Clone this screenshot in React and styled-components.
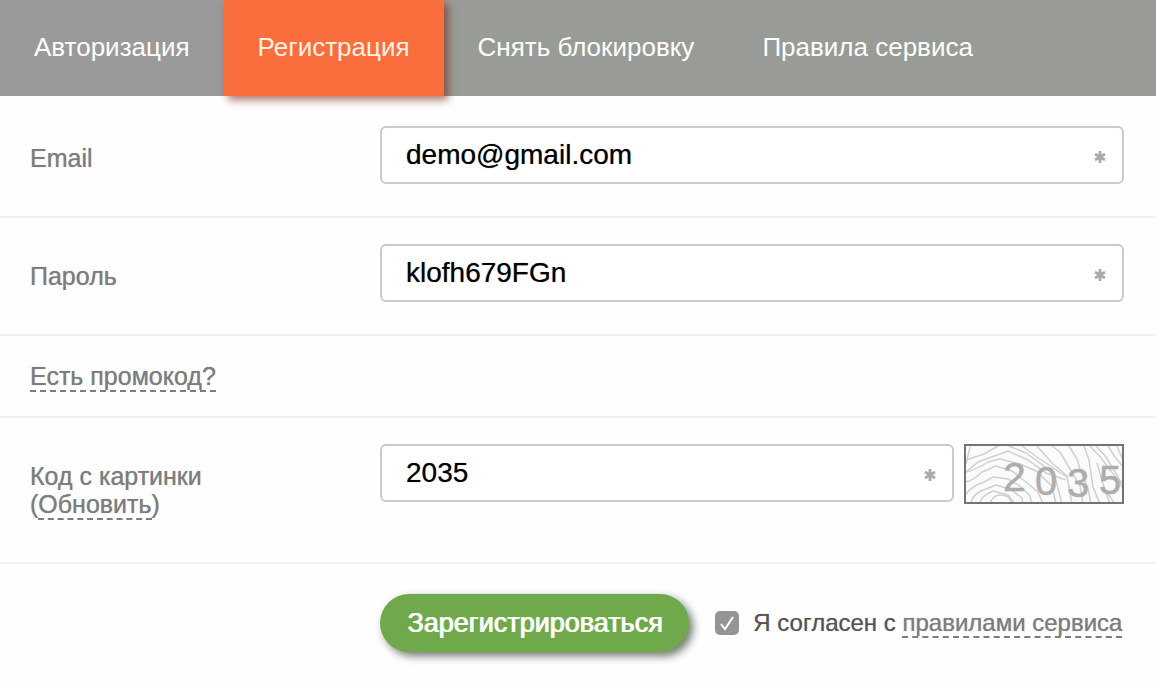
import React from "react";
import styled, { createGlobalStyle } from "styled-components";

const GlobalStyle = createGlobalStyle`
  * {
    box-sizing: border-box;
  }
  body {
    margin: 0;
    background: #fefefe;
    font-family: "Liberation Sans", Arial, sans-serif;
    font-size: 25px;
    line-height: 28px;
    color: #7d7d7d;
  }
`;

const Nav = styled.nav`
  display: flex;
  background: linear-gradient(90deg, #9a9a9a 0, #9a9a9a 222px, #999b97 442px);
`;

const Tab = styled.a`
  height: 96px;
  padding: 0 34px;
  font-size: 26px;
  line-height: 94px;
  white-space: nowrap;
  text-decoration: none;
  color: ${(props) => (props.$active ? "#fff3e2" : "#fff")};
  background: ${(props) => (props.$active ? "#fa6d3c" : "transparent")};
  box-shadow: ${(props) =>
    props.$active ? "4px 4px 8px rgba(120, 30, 10, 0.6)" : "none"};
`;

const Form = styled.form`
  padding-top: 4px;
`;

const Row = styled.div`
  display: grid;
  grid-template-columns: 350px 1fr;
  align-items: start;
  padding: 26px 32px 32px 30px;
  border-bottom: 2px solid #f1f1f1;
`;

const PromoRow = styled.div`
  padding: 26px 30px;
  border-bottom: 2px solid #f1f1f1;
`;

const LabelBox = styled.div`
  padding: 18px 0 12px;
  text-shadow: 0 0 1px #9a9a9a;
`;

const Label = styled.label`
  display: block;
`;

const DashedLink = styled.a`
  color: #7d7d7d;
  text-decoration: none;
  text-shadow: 0 0 1px #9a9a9a;
  border-bottom: 2px dashed #7d7d7d;
`;

const Fields = styled.div`
  display: flex;
  gap: 10px;
`;

const InputWrap = styled.div`
  position: relative;
  flex: 1;
  height: 58px;
`;

const Input = styled.input`
  display: block;
  width: 100%;
  height: 58px;
  padding: 0 60px 0 24px;
  border: 2px solid #cbcbcb;
  border-radius: 6px;
  background: #fff;
  font-family: inherit;
  font-size: 28px;
  color: #000;
  text-shadow: 0 0 1px #777;
  outline: none;
`;

const Star = styled.svg`
  position: absolute;
  top: 25px;
  right: 18px;
  width: 12px;
  height: 12px;
`;

const Captcha = styled.svg`
  display: block;
  width: 160px;
  height: 60px;
  font-family: "Liberation Sans", Arial, sans-serif;
`;

const Footer = styled.div`
  display: flex;
  align-items: center;
  padding: 30px 28px 32px 380px;
`;

const Submit = styled.button`
  height: 58px;
  padding: 0 27px;
  border: 0;
  border-radius: 29px;
  background: #70a94b;
  box-shadow: 4px 4px 8px rgba(40, 50, 30, 0.65);
  font-family: inherit;
  font-size: 27px;
  color: #fff;
  text-shadow: 1px 0 0 #fff;
  white-space: nowrap;
`;

const Agree = styled.div`
  display: flex;
  align-items: center;
  gap: 14px;
  margin-left: 26px;
  font-size: 24px;
  color: #545454;
  white-space: nowrap;
`;

const Check = styled.input`
  appearance: none;
  flex: none;
  width: 24px;
  height: 24px;
  margin: 0;
  border-radius: 5px;
  background: #959595;

  &:checked {
    background: #959595
      url("data:image/svg+xml,%3Csvg xmlns='http://www.w3.org/2000/svg' viewBox='0 0 24 24'%3E%3Cpath d='M6 13l4 5L18 6' fill='none' stroke='white' stroke-width='2'/%3E%3C/svg%3E");
  }
`;

const AgreeText = styled.span`
  text-shadow: 0 0 1px #999;
`;

const tabs = [
  "Авторизация",
  "Регистрация",
  "Снять блокировку",
  "Правила сервиса",
];

const Required = () => (
  <Star viewBox="0 0 12 12" aria-hidden="true">
    <path
      d="M6 0v12M1 3l10 6M1 9l10-6"
      stroke="#aaa"
      strokeWidth="2.8"
      fill="none"
    />
  </Star>
);

const CaptchaImage = () => (
  <Captcha viewBox="0 0 160 60" role="img" aria-label="2035">
    <rect width="160" height="60" fill="#fbfbfb" />
    <g fill="none" stroke="#d0d0d0" strokeWidth="1.5">
      <path d="M2 16L20 10L34 2" />
      <path d="M2 28L14 18L44 7L64 16L82 29L102 36" />
      <path d="M2 28Q14 25 24 18L36 15L56 20L72 27L88 42L92 60" />
      <path d="M2 38Q10 36 18 28L32 22L48 27L62 38L74 48L79 60" />
      <path d="M2 50Q8 42 20 38L29 33L44 35L56 42L66 52L68 60" />
      <path d="M7 59Q9 49 22 45L32 41L46 45L58 54L59 60" />
      <path d="M16 59Q17 52 29 47L44 51L51 60" />
      <path d="M26 60Q28 51 37 51T48 60" />
      <path d="M2 20L6 3" />
      <path d="M45 2L62 9L80 22L91 33L98 60" />
      <path d="M58 2L73 13L88 23L104 34" />
      <path d="M73 2L88 19L103 32L108 60" />
      <path d="M88 2L96 8L106 25L116 42L119 60" />
      <path d="M105 2L113 15L117 28L124 44L127 60" />
      <path d="M120 2L125 16L129 43L136 60" />
      <path d="M126 2L137 14L150 31L160 40" />
      <path d="M132 2L142 13L153 31L160 48" />
      <path d="M144 2L151 13L160 24" />
      <path d="M153 2L158 14" />
      <path d="M133 19L139 40L146 60M140 44L151 60" />
    </g>
    <g fill="#adadad" stroke="#adadad" strokeWidth="0.5">
      <text x="39" y="47" fontSize="41">2</text>
      <text x="71" y="51" fontSize="40">0</text>
      <text x="103" y="53" fontSize="40">3</text>
      <text x="135" y="50" fontSize="40">5</text>
    </g>
    <rect x="1" y="1" width="158" height="58" fill="none" stroke="#747474" strokeWidth="2" />
  </Captcha>
);

const App = () => {
  return (
    <>
      <GlobalStyle />
      <Nav>
        {tabs.map((tab, i) => (
          <Tab key={tab} href="#" $active={i === 1}>
            {tab}
          </Tab>
        ))}
      </Nav>
      <Form>
        <Row>
          <LabelBox>
            <Label htmlFor="email">Email</Label>
          </LabelBox>
          <InputWrap>
            <Input id="email" type="text" defaultValue="demo@gmail.com" />
            <Required />
          </InputWrap>
        </Row>
        <Row>
          <LabelBox>
            <Label htmlFor="password">Пароль</Label>
          </LabelBox>
          <InputWrap>
            <Input id="password" type="text" defaultValue="klofh679FGn" />
            <Required />
          </InputWrap>
        </Row>
        <PromoRow>
          <DashedLink href="#">Есть промокод?</DashedLink>
        </PromoRow>
        <Row>
          <LabelBox>
            <Label htmlFor="code">Код с картинки</Label>
            (<DashedLink href="#">Обновить</DashedLink>)
          </LabelBox>
          <Fields>
            <InputWrap>
              <Input id="code" type="text" defaultValue="2035" />
              <Required />
            </InputWrap>
            <CaptchaImage />
          </Fields>
        </Row>
        <Footer>
          <Submit type="button">Зарегистрироваться</Submit>
          <Agree>
            <Check id="agree" type="checkbox" defaultChecked />
            <AgreeText>
              <label htmlFor="agree">Я согласен с</label>{" "}
              <DashedLink href="#">правилами сервиса</DashedLink>
            </AgreeText>
          </Agree>
        </Footer>
      </Form>
    </>
  );
};

export default App;
